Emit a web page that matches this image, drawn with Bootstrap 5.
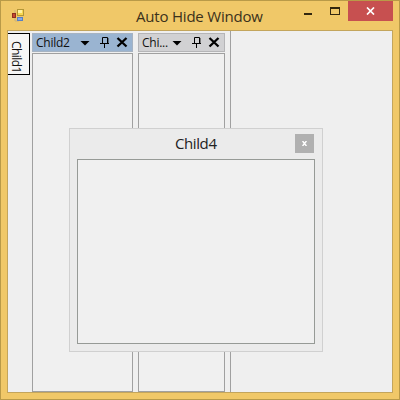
<!DOCTYPE html>
<html lang="en">
<head>
<meta charset="utf-8">
<meta name="viewport" content="width=device-width, initial-scale=1">
<title>Auto Hide Window</title>
<link href="https://cdn.jsdelivr.net/npm/bootstrap@5.3.0/dist/css/bootstrap.min.css" rel="stylesheet">
<style>
body{font-family:"Open Sans","Noto Sans",sans-serif;color:#111;width:400px;height:400px;overflow:hidden}
svg{display:block;flex:none}
.frame{width:400px;height:400px;background:#f0c868;border:1px solid #b99a48;padding:0 6px 6px}
.titlebar{height:29px;flex:none}
.app-icon{margin:7px 0 0 5px}
.caption-text{font-size:15px;line-height:20px;color:#3b311b;letter-spacing:-.2px;margin:5px 0 0 109px;width:128px;white-space:nowrap}
.min-glyph{margin:12px 0 0 40px;width:8px;height:2px;background:#33270f}
.max-glyph{margin:6px 0 0 18px;width:10px;height:8px;border:1px solid #33270f;border-top-width:2px}
.close-box{width:45px;height:20px;background:#c75050;margin-left:auto}
.client{background:#efefef;border:1px solid #c3a55c;min-height:0}
.side-tab{width:22px;height:42px;margin-top:2px;border:1px solid #000;border-left:0;background:#f6f6f6;writing-mode:vertical-rl;font-size:12px;line-height:15px;letter-spacing:-.55px;padding:7px 5px 0 0;white-space:nowrap}
.pane{margin-top:2px}
.pane-a{width:101px;margin-left:2px}
.pane-b{width:87px;margin-left:5px}
.pane-head{height:19px;flex:none;background:#d1d1d3;border:1px solid #b5b5b7;font-size:12px;line-height:17px;padding-left:3px;letter-spacing:-.25px}
.pane-a .pane-head{background:#9ab4d1;border-color:#a6b3c2}
.pane-body{margin-top:1px;border:1px solid #a0a0a0;background:#f0f0f0}
.last-pane{margin-left:5px;border-left:1px solid #a0a0a0}
.floating{left:69px;top:128px;width:254px;height:224px;background:#ebebeb;border:1px solid #d0d0d0;padding:0 7px 7px}
.float-head{height:30px;flex:none}
.float-title{font-size:15px;line-height:20px;letter-spacing:-.4px;color:#222;margin:4px 0 0 98px}
.float-close{width:19px;height:19px;background:#b0b0b0;margin:5px 1px 0 auto}
.float-body{border:1px solid #969a96;background:#f0f0f0}
</style>
<script src="https://cdn.jsdelivr.net/npm/bootstrap@5.3.0/dist/js/bootstrap.bundle.min.js"></script>
</head>
<body>
<svg class="d-none" xmlns="http://www.w3.org/2000/svg">
<symbol id="tools" viewBox="0 0 52 17"><path d="M.5 7H9.500L5 11.500z"/><path d="M22.500 9V3.500h5V9M20 9.500h9M24.500 10v4" fill="none" stroke="#000"/><path d="M27 4h1.400v5H27z"/><path d="M37.500 4l9 8.500M46.500 4l-9 8.500" stroke="#000" stroke-width="2.300"/></symbol>
</svg>
<main class="frame d-flex flex-column position-relative">
  <header class="titlebar d-flex align-items-start">
    <svg class="app-icon" width="15" height="15" viewBox="0 0 15 15"><path d="M3 2v11h4" fill="none" stroke="#c9b17a"/><rect x=".5" y="5.500" width="3" height="4" fill="#c74632" stroke="#8e3020"/><rect x="5.500" y="1.500" width="6" height="6" fill="#f8d850" stroke="#b39636"/><path d="M6 2h4v3H6z" fill="#fff2a0"/><rect x="5.500" y="9.500" width="5" height="3" fill="#83a9e8" stroke="#587fc2"/></svg>
    <div class="caption-text">Auto Hide Window</div>
    <div class="min-glyph"></div><div class="max-glyph"></div>
    <div class="close-box d-flex align-items-center justify-content-center"><svg width="9" height="8" viewBox="0 0 9 8"><path d="M1 .5l7 7M8 .5l-7 7" stroke="#fff" stroke-width="1.700"/></svg></div>
  </header>
  <section class="client d-flex flex-grow-1">
    <div class="side-tab">Child1</div>
    <div class="pane pane-a d-flex flex-column">
      <div class="pane-head d-flex"><span>Child2</span><svg class="ms-auto" width="52" height="17"><use href="#tools"/></svg></div>
      <div class="pane-body flex-grow-1"></div>
    </div>
    <div class="pane pane-b d-flex flex-column">
      <div class="pane-head d-flex"><span>Chi...</span><svg class="ms-auto" width="52" height="17"><use href="#tools"/></svg></div>
      <div class="pane-body flex-grow-1"></div>
    </div>
    <div class="last-pane flex-grow-1"></div>
  </section>
</main>
<section class="floating position-absolute d-flex flex-column">
  <div class="float-head d-flex align-items-start"><div class="float-title">Child4</div>
    <div class="float-close d-flex align-items-center justify-content-center"><svg width="5" height="5" viewBox="0 0 5 5"><path d="M.5 0l4 5M4.500 0l-4 5" stroke="#fff" stroke-width="1.500"/></svg></div>
  </div>
  <div class="float-body flex-grow-1"></div>
</section>
</body>
</html>
